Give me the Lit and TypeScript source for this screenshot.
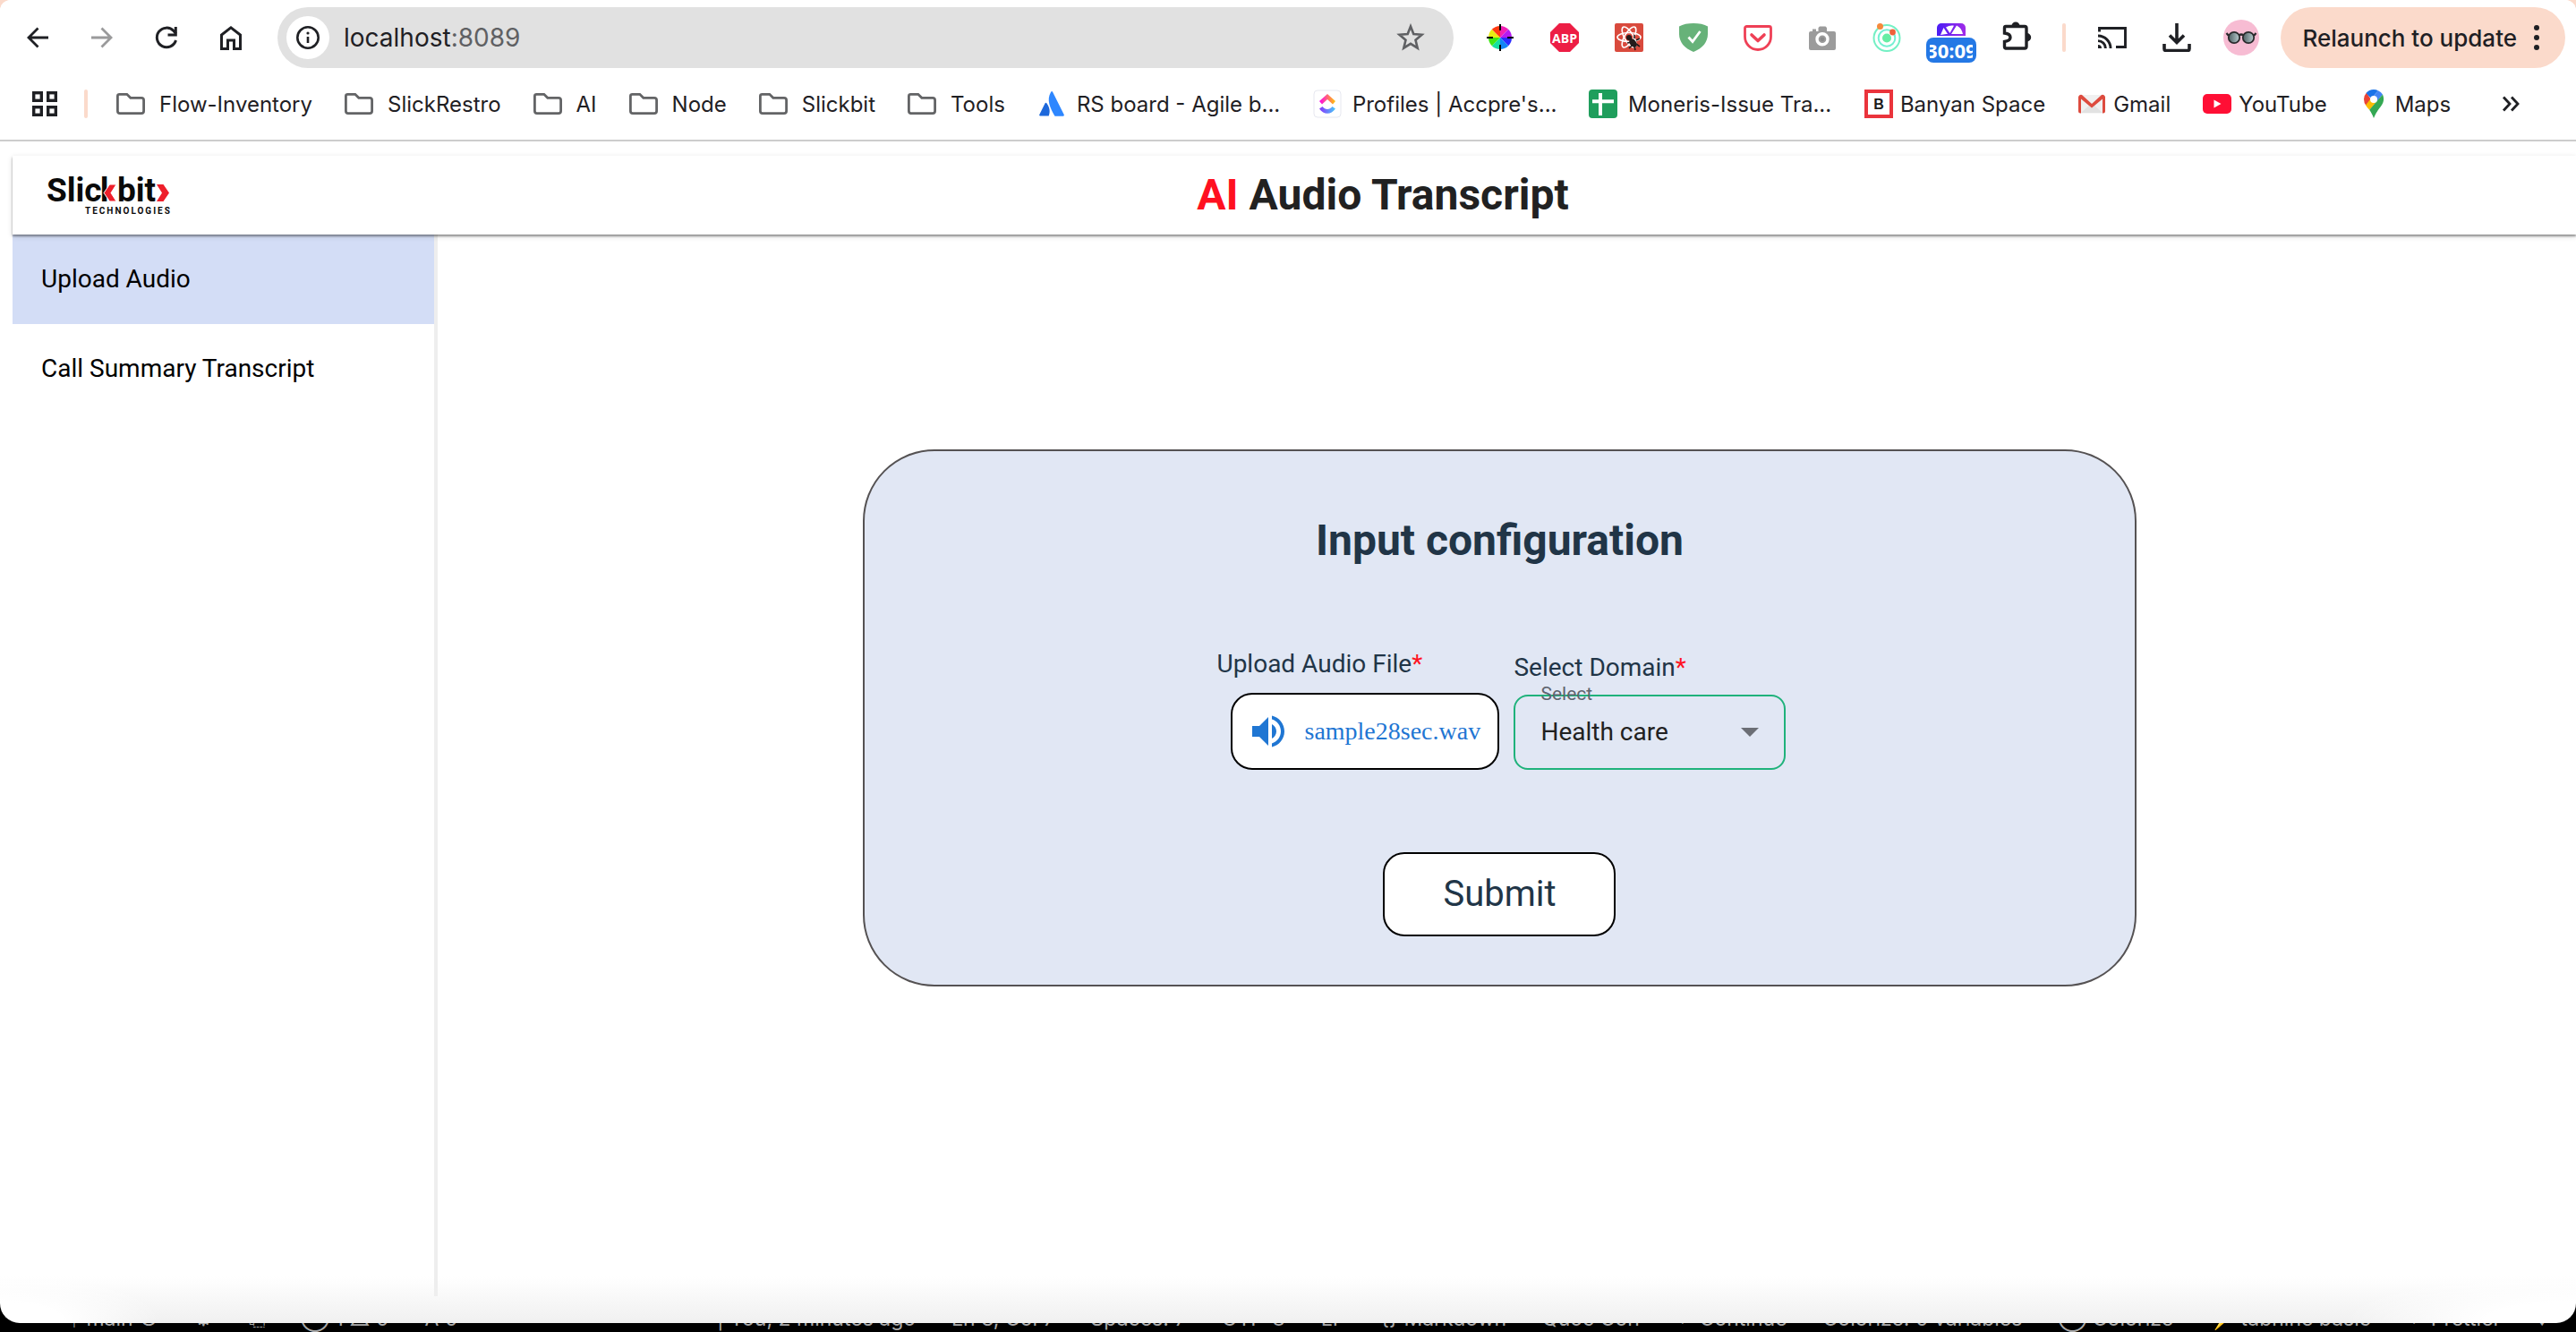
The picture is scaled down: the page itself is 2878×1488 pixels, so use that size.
import { LitElement, html, css, svg, TemplateResult } from "lit";
import { customElement, state } from "lit/decorators.js";

type Icon = TemplateResult;

const draw = (width: number, body: unknown, height = width): Icon =>
  html`<svg class="icon" width=${width} height=${height} viewBox="0 0 ${width} ${height}" aria-hidden="true">${body}</svg>`;

/* Toolbar glyphs */
const back = draw(32, svg`<path d="M28 16H6M16.500 5.500 6 16l10.500 10.500" fill="none" stroke="#1f2024" stroke-width="2.800"/>`);
const forward = draw(32, svg`<path d="M4 16h22M15.500 5.500 26 16 15.500 26.500" fill="none" stroke="#9a9a9b" stroke-width="2.800"/>`);
const reload = draw(32, svg`<path d="M26.500 19A10.800 10.800 0 1 1 24 8.500l2.500 3" fill="none" stroke="#1f2024" stroke-width="3"/><path d="M27.800 4v10.500H17.500v-3h7.300V4z" fill="#1f2024"/>`);
const home = draw(32, svg`<path d="M5.500 28.500V13L16 4.800 26.500 13v15.500h-7V19h-7v9.500z" fill="none" stroke="#1f2024" stroke-width="3"/>`);
const info = draw(32, svg`<circle cx="16" cy="16" r="11.700" fill="none" stroke="#1f2024" stroke-width="2.600"/><path d="M16 15v7" stroke="#1f2024" stroke-width="2.600"/><circle cx="16" cy="11" r="1.600" fill="#1f2024"/>`);
const star = draw(32, svg`<path d="M16 3.500 19.300 12l9.200.700-7 6 2.200 9L16 22.800 8.300 27.700l2.200-9-7-6 9.200-.700z" fill="none" stroke="#5f6063" stroke-width="2.600"/>`);
const wheel = draw(32, svg`
  <path d="M16 16V3A13 13 0 0 1 25.200 6.800z" fill="#f21fb5"/><path d="M16 16 25.200 6.800A13 13 0 0 1 29 16z" fill="#b51bf2"/>
  <path d="M16 16H29A13 13 0 0 1 25.200 25.200z" fill="#2b2bff"/><path d="M16 16l9.200 9.200A13 13 0 0 1 16 29z" fill="#1285f5"/>
  <path d="M16 16V29A13 13 0 0 1 6.800 25.200z" fill="#14e0a0"/><path d="M16 16 6.800 25.200A13 13 0 0 1 3 16z" fill="#3fe813"/>
  <path d="M16 16H3A13 13 0 0 1 6.800 6.800z" fill="#e9ec12"/><path d="M16 16 6.800 6.800A13 13 0 0 1 16 3z" fill="#ff3a12"/>
  <path d="M16 1v7M16 24v7M1 16h7M24 16h7" stroke="#000" stroke-width="2"/>`);
const abp = draw(32, svg`<path d="M10 0h12l10 10v12L22 32H10L0 22V10z" fill="#ed1e45"/><text x="16" y="21.500" text-anchor="middle" class="abp">ABP</text>`);
const react = draw(32, svg`<rect width="32" height="32" rx="2" fill="#d94a3d"/>
  <g fill="none" stroke="#fff" stroke-width="1.600"><ellipse cx="16" cy="15.500" rx="13" ry="5"/><ellipse cx="16" cy="15.500" rx="13" ry="5" transform="rotate(60 16 15.500)"/><ellipse cx="16" cy="15.500" rx="13" ry="5" transform="rotate(120 16 15.500)"/></g>
  <g fill="#231b1b" stroke="#231b1b"><circle cx="16" cy="16" r="3" stroke="none"/><ellipse cx="20.500" cy="22" rx="3.500" ry="5.500" transform="rotate(-35 20.500 22)" stroke="none"/><path d="M14 22l5-1M16 28l4-4M22 17v-4M24 19l4-2M24 23l4 3M22 26l1 4" stroke-width="1.600"/></g>`);
const shield = draw(32, svg`<path d="M16 0c6 0 12 1 16 3.500V12c0 9-6 16-16 20C6 28 0 21 0 12V3.500C4 1 10 0 16 0z" fill="#67b279"/><path d="M10.500 15.500l4.500 5L23.500 9" fill="none" stroke="#fff" stroke-width="2.800"/>`);
const pocket = draw(32, svg`<path d="M3.500 3.500h25a2 2 0 0 1 2 2V15a14.500 14.500 0 0 1-29 0V5.500a2 2 0 0 1 2-2z" fill="none" stroke="#ef4056" stroke-width="2.800"/><path d="M9 13l7 6.500 7-6.500" fill="none" stroke="#ef4056" stroke-width="3.600" stroke-linecap="round" stroke-linejoin="round"/>`);
const camera = draw(32, svg`<path d="M3 9h2V6.500h4V9h2.500V5L13 3.500h6.500L21 5v4h8a2 2 0 0 1 2 2v17a2 2 0 0 1-2 2H3a2 2 0 0 1-2-2V11a2 2 0 0 1 2-2z" fill="#9b9b9b"/><circle cx="16" cy="17.800" r="6" fill="none" stroke="#fff" stroke-width="3.400"/><circle cx="16" cy="17.800" r="2.400" fill="#8a8a8a"/>`);
const orbit = draw(32, svg`<g fill="none" stroke-width="2"><circle cx="16" cy="16.500" r="14.500" stroke="#74f0c4"/><circle cx="16" cy="16.500" r="9.300" stroke="#74f0d2"/></g><circle cx="16" cy="16.500" r="5" fill="#66eda4"/><circle cx="8.500" cy="3.500" r="3.500" fill="#f58a3c"/><circle cx="22.500" cy="10" r="3.400" fill="#f0623a"/>`);
const meter = draw(32, svg`<defs><linearGradient id="meter" x1="0" y1="0" x2="1" y2="0"><stop offset="0" stop-color="#4a1df5"/><stop offset="1" stop-color="#a02be8"/></linearGradient></defs>
  <path d="M0 14V5a5 5 0 0 1 5-5h22a5 5 0 0 1 5 5v9z" fill="url(#meter)"/><path d="M4 13 7.500 5l4.500 7h-1.500zM10 4.500C13 2.500 17 2 19 2.800L14.500 11zM16 12l6-9.500c4 2 6 5 7 9.500z" fill="#fff"/>`, 14);
const puzzle = draw(36, svg`<path d="M7 5.500H28a2 2 0 0 1 2 2V28a2 2 0 0 1-2 2H7a2 2 0 0 1-1.500-2v-5.500c4-.500 6.500-2 6.500-4.700s-2.500-4.300-6.500-4.800V7A1.600 1.600 0 0 1 7 5.500z" fill="none" stroke="#1f2024" stroke-width="3.400"/><path d="M13.500 5a4.500 4.500 0 0 1 9 0zM30.500 13a4.700 4.700 0 0 1 0 9.400z" fill="#1f2024"/>`);
const cast = draw(32, svg`<g fill="none" stroke="#1f2024" stroke-width="2.900"><path d="M1.500 9.500V5.500H30.500V26.500H20"/><path d="M0 14a14 14 0 0 1 14 14M0 19.600A8.400 8.400 0 0 1 8.400 28"/></g><path d="M0 24a4 4 0 0 1 4 4H0z" fill="#1f2024"/>`);
const download = draw(32, svg`<path d="M16 0v22M8 13.500l8 8 8-8M2 23v5.500a2 2 0 0 0 2 2h24a2 2 0 0 0 2-2V23" fill="none" stroke="#1f2024" stroke-width="3.600"/>`);
const avatar = draw(40, svg`<defs><linearGradient id="lens" x1="0" y1="0" x2="1" y2="0"><stop offset="0" stop-color="#4d6063"/><stop offset="1" stop-color="#b9cccf"/></linearGradient></defs>
  <circle cx="20" cy="20" r="20" fill="#f7bcd3"/><g fill="url(#lens)" stroke="#2a2a2c" stroke-width="1.800"><circle cx="12" cy="20" r="6.200"/><circle cx="28" cy="20" r="6.200"/></g><path d="M17.500 17.500q2.500-2 5 0M6 18l-2.500-3M34 18l2.500-3" fill="none" stroke="#2a2a2c" stroke-width="2.200"/>`);
const dots = draw(8, svg`<g fill="#1f2024"><circle cx="4" cy="5" r="3"/><circle cx="4" cy="16" r="3"/><circle cx="4" cy="27" r="3"/></g>`, 32);

/* Bookmark glyphs */
const apps = draw(32, svg`<g fill="none" stroke="#1f2024" stroke-width="3.400"><rect x="3.700" y="3.700" width="8.600" height="8.600"/><rect x="19.700" y="3.700" width="8.600" height="8.600"/><rect x="3.700" y="19.700" width="8.600" height="8.600"/><rect x="19.700" y="19.700" width="8.600" height="8.600"/></g>`);
const folder = draw(32, svg`<path d="M3.300 5.300h8.500l4 4H28a2.600 2.600 0 0 1 2.600 2.600V24a2.600 2.600 0 0 1-2.600 2.600H4A2.600 2.600 0 0 1 1.400 24V7.200a1.900 1.900 0 0 1 1.900-1.900z" fill="none" stroke="#636466" stroke-width="2.800"/>`);
const atlassian = draw(32, svg`<path d="M8.500 15.500c.800-1 1.600-.800 2 0 3.400 5 4 9 2.200 14H3.200c-1 0-1.300-.800-.900-1.500z" fill="#1d68db"/><path d="M15 3c.700-1.200 1.700-1.200 2.200 0l12.500 25c.400.900 0 1.700-1 1.700h-9.200C14 20 10 12 15 3z" fill="#2e87ff"/>`);
const clickup = draw(32, svg`<defs><linearGradient id="cu1" x1="0" x2="1"><stop offset="0" stop-color="#ff02f0"/><stop offset="1" stop-color="#ffc800"/></linearGradient><linearGradient id="cu2" x1="0" x2="1"><stop offset="0" stop-color="#8930fd"/><stop offset="1" stop-color="#49ccf9"/></linearGradient></defs>
  <rect x="1" y="1" width="30" height="30" rx="4" fill="#fff" stroke="#e7e8f0"/><path d="M16 5l9 8-3 3.500-6-5.500-6 5.500L7 13z" fill="url(#cu1)"/><path d="M7 21.500l3.500-2.500c3 4 8 4 11 0l3.500 2.500c-5 7-13 7-18 0z" fill="url(#cu2)"/>`);
const sheets = draw(32, svg`<rect width="32" height="32" rx="4" fill="#1f9e5c"/><path d="M13 4v25M4 13.200h24" stroke="#fff" stroke-width="4"/>`);
const banyan = draw(32, svg`<rect x="2" y="2" width="28" height="28" fill="#fff" stroke="#ea343c" stroke-width="4"/><text x="16" y="21.500" text-anchor="middle" class="banyan">B</text>`);
const gmail = draw(32, svg`<rect x="2" y="6" width="28" height="20.500" rx="1.500" fill="#f0f0f0"/><path d="M4 26l12-11 12 11z" fill="#e2e2e2"/><path d="M1 8.500A3 3 0 0 1 5 6l11 10L27 6a3 3 0 0 1 4 2.500V24a2.500 2.500 0 0 1-2.500 2.500H28V10.500L16 20.500 4 10.500v16h-.500A2.500 2.500 0 0 1 1 24z" fill="#dd4b3e"/>`);
const youtube = draw(32, svg`<rect y="5" width="32" height="22" rx="5" fill="#ff0f35"/><path d="M12.500 11.500l8 4.500-8 4.500z" fill="#fff"/>`);
const maps = draw(32, svg`<path d="M8 3.500A11 11 0 0 0 7.500 18l6-6z" fill="#ea4335"/><path d="M16 0a11 11 0 0 0-8.500 4l5.500 6L21 1.200A11 11 0 0 0 16 0z" fill="#1a73e8"/><path d="M21 1.200 13 10l6 4 7-8.500A11 11 0 0 0 21 1.200z" fill="#4285f4"/><path d="M7 17.500c1 1.800 2.800 3.500 4.200 5.200L20 13l-8-2z" fill="#fbbc04"/><path d="M26 5.500c2.500 6 .500 10-2.500 14-2.800 3.500-4.500 6-7.500 12.500-1.500-4-2.500-6-4.800-9.300z" fill="#34a853"/><circle cx="16" cy="11" r="4" fill="#fff"/>`);
const chevrons = draw(32, svg`<path d="M7 8.500 14 16l-7 7.500M16 8.500 23 16l-7 7.500" fill="none" stroke="#1f2024" stroke-width="2.800"/>`);
const volume = html`<svg class="icon" width="48" height="48" viewBox="0 0 24 24" aria-hidden="true"><path fill="#1f76d3" d="M3 9v6h4l5 5V4L7 9H3zm13.500 3c0-1.770-1.020-3.290-2.500-4.030v8.050c1.480-.730 2.500-2.250 2.500-4.020zM14 3.230v2.060c2.890.860 5 3.540 5 6.710s-2.110 5.850-5 6.710v2.060c4.010-.910 7-4.490 7-8.770s-2.990-7.860-7-8.770z"/></svg>`;

interface Bookmark { label: string; icon: Icon; kind: "folder" | "page" | "long"; }

const BOOKMARKS: Bookmark[] = [
  { label: "Flow-Inventory", icon: folder, kind: "folder" },
  { label: "SlickRestro", icon: folder, kind: "folder" },
  { label: "AI", icon: folder, kind: "folder" },
  { label: "Node", icon: folder, kind: "folder" },
  { label: "Slickbit", icon: folder, kind: "folder" },
  { label: "Tools", icon: folder, kind: "folder" },
  { label: "RS board - Agile b...", icon: atlassian, kind: "long" },
  { label: "Profiles | Accpre's...", icon: clickup, kind: "long" },
  { label: "Moneris-Issue Tra...", icon: sheets, kind: "long" },
  { label: "Banyan Space", icon: banyan, kind: "page" },
  { label: "Gmail", icon: gmail, kind: "page" },
  { label: "YouTube", icon: youtube, kind: "page" },
  { label: "Maps", icon: maps, kind: "page" },
];

const EXTENSIONS: [string, Icon][] = [
  ["Colour picker", wheel], ["Ad blocker", abp], ["React tools", react], ["Shield", shield],
  ["Pocket", pocket], ["Screenshot", camera], ["Orbit", orbit],
];

@customElement("browser-bar")
class BrowserBar extends LitElement {
  static styles = css`
    :host { display: block; border-bottom: 2px solid #cdcdcd; font-family: Inter, Roboto, sans-serif; color: #1f2024; background: #fff; }
    .icon { display: block; flex: none; }
    button { border: 0; padding: 0; background: none; font: inherit; color: inherit; display: flex; align-items: center; justify-content: center; }
    .toolbar { display: flex; align-items: center; height: 84px; padding: 0 12px 0 6px; }
    .tool { width: 72px; height: 72px; flex: none; }
    .address { flex: 1; display: flex; align-items: center; height: 68px; margin: 0 16px; padding: 0 32px 0 10px; border-radius: 34px; background: #e1e1e1; font-size: 28px; }
    .site { width: 48px; height: 48px; border-radius: 50%; background: #fff; }
    .url { flex: 1; padding-left: 16px; }
    .port { color: #5f6063; }
    .rule { flex: none; width: 4px; height: 32px; border-radius: 2px; background: #fbdacb; }
    .toolbar .rule { margin: 0 16px; }
    .timer { flex-direction: column; gap: 2px; padding-top: 12px; box-sizing: border-box; }
    .count { display: flex; justify-content: center; width: 56px; height: 28px; border-radius: 8px; background: #2478e5; color: #fff; font: 700 22px/28px "Open Sans", sans-serif; }
    .clip { width: 48px; overflow: hidden; display: flex; justify-content: center; }
    .relaunch { gap: 18px; height: 68px; margin-left: 8px; padding: 0 28px 0 24px; border-radius: 34px; background: #fbdacb; font-size: 26px; font-weight: 500; white-space: nowrap; }
    .bookmarks { display: flex; align-items: center; height: 64px; padding: 0 34px 8px; font-size: 24px; }
    .bookmarks .rule { margin: 0 32px 0 28px; }
    .list { display: flex; flex: 1; gap: 36px; }
    .mark { flex: none; display: flex; align-items: center; gap: 12px; white-space: nowrap; color: inherit; text-decoration: none; }
    .folder { gap: 16px; }
    .page { gap: 8px; }
    .long { width: 272px; }
    .more { width: 32px; height: 32px; margin-right: 22px; }
    .abp { font: 700 14px "Open Sans", sans-serif; fill: #fff; }
    .banyan { font: 700 16px "Liberation Sans", sans-serif; fill: #1b1b1b; }
  `;

  render() {
    return html`
      <div class="toolbar">
        <button class="tool" aria-label="Back">${back}</button>
        <button class="tool" aria-label="Forward">${forward}</button>
        <button class="tool" aria-label="Reload">${reload}</button>
        <button class="tool" aria-label="Home">${home}</button>
        <div class="address">
          <button class="site" aria-label="Site information">${info}</button>
          <span class="url">localhost<span class="port">:8089</span></span>
          <button aria-label="Bookmark this page">${star}</button>
        </div>
        ${EXTENSIONS.map(([name, icon]) => html`<button class="tool" aria-label=${name}>${icon}</button>`)}
        <button class="tool timer" aria-label="Timer">${meter}<span class="count"><span class="clip">30:09</span></span></button>
        <button class="tool" aria-label="Extensions">${puzzle}</button>
        <span class="rule"></span>
        <button class="tool" aria-label="Cast">${cast}</button>
        <button class="tool" aria-label="Downloads">${download}</button>
        <button class="tool" aria-label="Profile">${avatar}</button>
        <button class="relaunch">Relaunch to update ${dots}</button>
      </div>
      <nav class="bookmarks" aria-label="Bookmarks">
        <button aria-label="Apps">${apps}</button>
        <span class="rule"></span>
        <div class="list">
          ${BOOKMARKS.map((b) => html`<a class="mark ${b.kind}" href="#">${b.icon}<span>${b.label}</span></a>`)}
        </div>
        <button class="more" aria-label="More bookmarks">${chevrons}</button>
      </nav>`;
  }
}

@customElement("audio-form")
class AudioForm extends LitElement {
  @state() private file = "sample28sec.wav";

  static styles = css`
    :host { display: block; width: 60%; }
    .card { box-sizing: border-box; display: flex; flex-direction: column; align-items: center; padding: 72px 32px 54px; border: 2px solid #555253; border-radius: 80px; background: #e1e7f4; color: #213547; font: 28px/32px Roboto, sans-serif; }
    h2 { margin: 0 0 94px; font-size: 48px; line-height: 56px; font-weight: 700; }
    .fields { display: flex; align-items: flex-end; gap: 16px; margin-bottom: 92px; padding-left: 4px; }
    .field { display: flex; flex-direction: column; gap: 16px; }
    .domain { gap: 14px; }
    .star { color: #ff1322; }
    .file { box-sizing: border-box; display: flex; align-items: center; gap: 16px; width: 300px; height: 86px; margin-left: 16px; padding: 0 16px; border: 2px solid #000; border-radius: 24px; background: #fff; color: #1f76d3; font-family: "Liberation Serif", serif; }
    .picker { position: absolute; width: 1px; height: 1px; opacity: 0; }
    .choice { position: relative; display: flex; align-items: center; }
    select { appearance: none; box-sizing: border-box; width: 304px; height: 84px; padding: 0 28px; border: 2px solid #1fb27b; border-radius: 16px; background: none; color: #212121; font: inherit; }
    .hint { position: absolute; left: 30px; top: -13px; font-size: 21px; line-height: 24px; color: #5f646e; }
    .arrow { position: absolute; right: 30px; pointer-events: none; }
    .submit { width: 260px; height: 94px; border: 2px solid #000; border-radius: 24px; background: #fff; color: #213547; font: 40px/48px Roboto, sans-serif; }
  `;

  private pick(e: Event) {
    const chosen = (e.target as HTMLInputElement).files?.[0];
    if (chosen) this.file = chosen.name;
  }

  render() {
    return html`
      <form class="card" @submit=${(e: Event) => e.preventDefault()}>
        <h2>Input configuration</h2>
        <div class="fields">
          <div class="field">
            <label for="audio">Upload Audio File<span class="star">*</span></label>
            <label class="file" for="audio">${volume}<span>${this.file}</span></label>
            <input class="picker" id="audio" type="file" accept="audio/*" @change=${this.pick} />
          </div>
          <div class="field domain">
            <label for="domain">Select Domain<span class="star">*</span></label>
            <div class="choice">
              <select id="domain"><option>Health care</option></select>
              <span class="hint">Select</span>
              <svg class="arrow" width="20" height="10" viewBox="0 0 20 10" aria-hidden="true"><path d="M0 0h20L10 10z" fill="#6b6e75"/></svg>
            </div>
          </div>
        </div>
        <button class="submit" type="submit">Submit</button>
      </form>`;
  }
}

@customElement("app-root")
class AppRoot extends LitElement {
  static styles = css`
    :host { display: flex; flex-direction: column; min-height: 100vh; overflow: hidden; background: linear-gradient(#fbdacb 50%, #000 50%); font-family: Roboto, sans-serif; }
    .window { flex: 1; display: flex; flex-direction: column; border-radius: 12px 12px 22px 22px; overflow: hidden; background: radial-gradient(ellipse 180px 60px at 0 100%, #fff 40%, transparent), radial-gradient(ellipse 260px 60px at 100% 100%, #fff 40%, transparent), linear-gradient(to top, #f0f0f0, #fff 52px); }
    .header { position: relative; z-index: 1; display: flex; align-items: center; gap: 20px; height: 88px; margin: 16px 0 0 14px; padding-left: 38px; background: #fff; box-shadow: 0 2px 2px rgba(0, 0, 0, 0.36), 0 2px 6px rgba(0, 0, 0, 0.16); }
    .logo { flex: none; display: block; }
    .brand { font: 700 37px Roboto, sans-serif; fill: #0a0a0a; }
    .sub { font: 700 10px Roboto, sans-serif; fill: #0a0a0a; letter-spacing: 2px; }
    h1 { flex: 1; margin: 0; text-align: center; font-size: 48px; line-height: 56px; font-weight: 700; color: #212121; }
    .ai { color: #ff1020; }
    .body { flex: 1; display: flex; margin: 0 16px 30px 14px; }
    .side { flex: none; width: 471px; border-right: 4px solid #eee; }
    .link { display: block; padding: 34px 32px; font-size: 28px; line-height: 32px; color: #000; text-decoration: none; }
    .active { background: #d3ddf6; }
    .main { flex: 1; display: flex; justify-content: center; align-items: flex-start; padding-top: 240px; }
    .status { flex: none; display: flex; justify-content: space-between; height: 10px; overflow: hidden; padding: 0 32px 0 22px; background: #000; color: #aaa; font: 23px/26px Inter, sans-serif; white-space: nowrap; align-items: flex-end; }
    .group { display: flex; gap: 40px; padding-bottom: 2px; }
  `;

  render() {
    return html`
      <div class="window">
        <browser-bar></browser-bar>
        <header class="header">
          <svg class="logo" width="140" height="64" viewBox="0 -8 140 64" role="img" aria-label="Slickbit Technologies">
            <defs><clipPath id="stem"><path d="M60-8h9v48h-9z"/></clipPath></defs>
            <text class="brand" x="0" y="31">Slic</text>
            <text class="brand" x="60" y="31" clip-path="url(#stem)">k</text>
            <text class="brand" x="79" y="31">bit</text>
            <path d="M70.500 12H78l-6 9.500 6 9.500h-7.500L64 21.500z" fill="#ee1f2b" stroke="#fff" stroke-width="1"/>
            <path d="M123 12h7.500l6.500 9.500-6.500 9.500H123l6-9.500z" fill="#ee1f2b"/>
            <text class="sub" x="43" y="45">TECHNOLOGIES</text>
          </svg>
          <h1><span class="ai">AI</span> Audio Transcript</h1>
        </header>
        <div class="body">
          <nav class="side" aria-label="Sections">
            <a class="link active" href="#upload">Upload Audio</a>
            <a class="link" href="#summary">Call Summary Transcript</a>
          </nav>
          <main class="main"><audio-form></audio-form></main>
        </div>
      </div>
      <footer class="status">
        <div class="group"><span>⌁</span><span>ᛘ main ↻</span><span>⚙</span><span>⎘</span><span>⊗ 1 △ 0</span><span>Å 0</span></div>
        <div class="group">
          <span>| You, 2 minutes ago</span><span>Ln 3, Col 7</span><span>Spaces: 7</span><span>UTF-8</span><span>LF</span><span>{} Markdown</span><span>Quoc Con</span><span>✓ Continue</span><span>Colorize: 0 variables</span><span>◯ Colorize</span><span>⚡ tabnine basic</span><span>✓ Prettier</span><span>♦</span>
        </div>
      </footer>`;
  }
}
